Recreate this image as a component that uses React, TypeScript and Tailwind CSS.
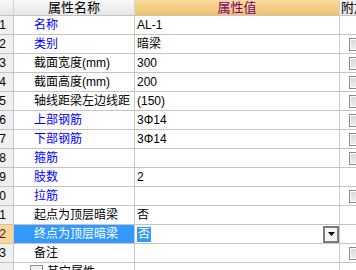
type Row = {
  n: number
  name: string
  blue?: boolean
  value: string
  check?: boolean
  selected?: boolean
}

const rows: Row[] = [
  { n: 1, name: '名称', blue: true, value: 'AL-1' },
  { n: 2, name: '类别', blue: true, value: '暗梁', check: true },
  { n: 3, name: '截面宽度(mm)', value: '300', check: true },
  { n: 4, name: '截面高度(mm)', value: '200', check: true },
  { n: 5, name: '轴线距梁左边线距', value: '(150)', check: true },
  { n: 6, name: '上部钢筋', blue: true, value: '3Φ14', check: true },
  { n: 7, name: '下部钢筋', blue: true, value: '3Φ14', check: true },
  { n: 8, name: '箍筋', blue: true, value: '', check: true },
  { n: 9, name: '肢数', blue: true, value: '2' },
  { n: 10, name: '拉筋', blue: true, value: '', check: true },
  { n: 11, name: '起点为顶层暗梁', value: '否' },
  { n: 12, name: '终点为顶层暗梁', value: '否', selected: true },
  { n: 13, name: '备注', value: '', check: true },
]

function CheckBox() {
  return (
    <div className="ml-[9px] mt-[1px] h-[13px] w-[13px] shrink-0 border border-[#8a8a8a] bg-white p-[1px]">
      <div className="h-full w-full bg-gradient-to-br from-[#d4d4d4] to-[#fafafa]" />
    </div>
  )
}

function DropButton() {
  return (
    <div className="flex h-[17px] w-[16px] items-center justify-center border-2 border-[#7c7c7c] bg-[#f4f4f4]">
      <svg width="7" height="4" viewBox="0 0 7 4">
        <path d="M0 0H7L3.5 4Z" fill="#000" />
      </svg>
    </div>
  )
}

export default function App() {
  return (
    <div className="h-[270px] w-[356px] overflow-hidden bg-white text-[12px] leading-[18px] text-black font-['Liberation_Sans','Noto_Sans_CJK_SC',sans-serif]">
      {/* header */}
      <div className="flex h-[16px] border-b border-[#c4c4c4]">
        <div className="w-[14px] shrink-0 border-r border-[#d4d4d4] bg-gradient-to-b from-[#f8f8f8] to-[#e6e6e6]" />
        <div className="flex w-[121px] shrink-0 items-center justify-center border-r border-[#d4d4d4] bg-gradient-to-b from-[#f8f8f8] to-[#e6e6e6] text-[13px] leading-[15px]">
          属性名称
        </div>
        <div className="flex w-[205px] shrink-0 items-center justify-center border-r border-[#d4d4d4] bg-gradient-to-b from-[#f9dc9f] to-[#efc06a] text-[13px] leading-[15px] text-[#7a007a]">
          属性值
        </div>
        <div className="flex flex-1 items-center overflow-hidden whitespace-nowrap bg-gradient-to-b from-[#f8f8f8] to-[#e6e6e6] pl-[1px] text-[13px] leading-[15px]">
          附加
        </div>
      </div>

      {rows.map((r) => (
        <div key={r.n} className="flex h-[19px] border-b border-[#c4c4c4]">
          <div
            className={`flex w-[14px] shrink-0 justify-end overflow-hidden border-r border-[#c8c8c8] pr-[7px] ${
              r.selected ? 'bg-[#ffd595] text-[#402040]' : 'bg-[#f0f0f0]'
            }`}
          >
            <span className="shrink-0">{r.n}</span>
          </div>
          <div
            className={`flex w-[121px] shrink-0 items-center whitespace-nowrap border-r border-[#c8c8c8] pl-[20px] ${
              r.selected ? 'bg-[#3399ff] text-white' : r.blue ? 'text-[#0000ff]' : ''
            }`}
          >
            {r.name}
          </div>
          <div className="flex w-[205px] shrink-0 items-center whitespace-nowrap border-r border-[#c8c8c8] pl-[2px]">
            {r.selected ? (
              <>
                <span className="bg-[#3399ff] px-[1px] leading-[15px] text-white">{r.value}</span>
                <div className="ml-auto">
                  <DropButton />
                </div>
              </>
            ) : (
              r.value
            )}
          </div>
          <div className="flex flex-1 items-center overflow-hidden">{r.check && <CheckBox />}</div>
        </div>
      ))}

      {/* group row, cut off at the bottom */}
      <div className="flex h-[19px]">
        <div className="w-[14px] shrink-0 border-r border-[#c8c8c8] bg-[#f0f0f0]" />
        <div className="flex w-[121px] shrink-0 items-start gap-[4px] border-r border-[#c8c8c8] pl-[16px] pt-[2px]">
          <div className="h-[11px] w-[13px] border border-[#909090] bg-[#f0f0f0]" />
          <span className="leading-[14px]">其它属性</span>
        </div>
        <div className="w-[205px] shrink-0 border-r border-[#c8c8c8]" />
        <div className="flex-1" />
      </div>
    </div>
  )
}
